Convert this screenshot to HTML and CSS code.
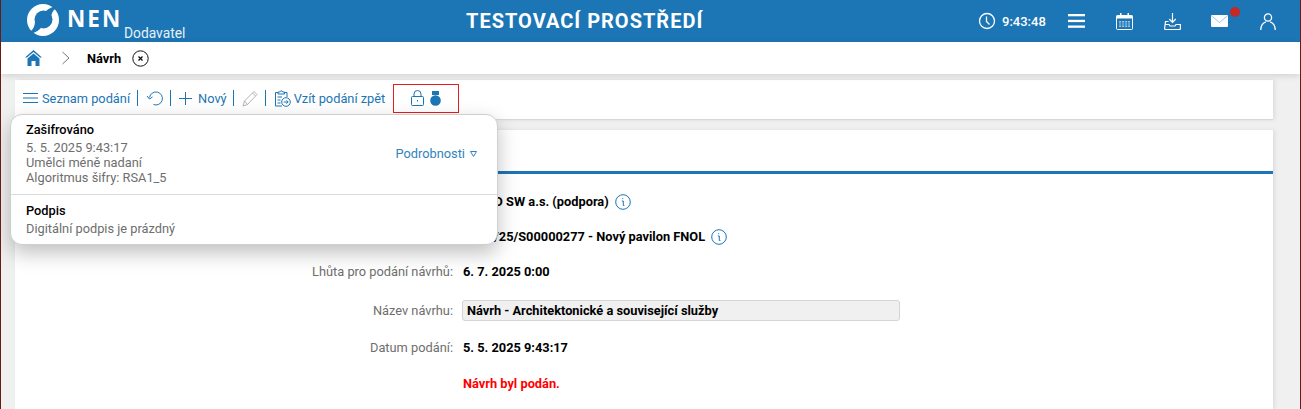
FILE: index.html
```html
<!DOCTYPE html>
<html lang="cs">
<head>
<meta charset="utf-8">
<title>NEN</title>
<link rel="stylesheet" href="styles.css">
</head>
<body>
<div class="app">
  <header class="topbar">
    <div class="brand">
      <svg class="logo" width="32" height="32" viewBox="0 0 32 32"><circle cx="16" cy="16" r="16" fill="#fff"/><circle cx="16.500" cy="15.500" r="9" fill="#1c75b4"/><path d="M8 17C8 22 6 26 3 27.500L5 29.500C9.500 28 12 26 14 24Z" fill="#1c75b4"/><path d="M24 15C24 10 26 6 29 4.500L27 2.500C22.500 4 20 6 18 8Z" fill="#1c75b4"/></svg>
      <span class="nen">NEN</span>
      <span class="role">Dodavatel</span>
    </div>
    <div class="env">TESTOVACÍ PROSTŘEDÍ</div>
    <div class="tools">
      <svg class="clock" width="18" height="18" viewBox="0 0 18 18" fill="none" stroke="#fff" stroke-width="1.300"><circle cx="9" cy="9" r="7.500"/><path d="M8.500 4.500V9.500L11.500 12.500"/></svg>
      <span class="time">9:43:48</span>
      <svg class="t-menu" width="17" height="14" viewBox="0 0 17 14" fill="#fff"><rect y="0" width="17" height="2.300"/><rect y="5.800" width="17" height="2.300"/><rect y="11.500" width="17" height="2.300"/></svg>
      <svg class="t-cal" width="17" height="17" viewBox="0 0 17 17"><rect x=".5" y="2.500" width="16" height="14" rx="1" fill="none" stroke="#fff"/><rect x=".5" y="2.500" width="16" height="3" fill="#fff"/><rect x="4" y="0" width="1.500" height="3" fill="#fff"/><rect x="11.500" y="0" width="1.500" height="3" fill="#fff"/><path d="M3 8h11v6H3z" fill="#fff" opacity=".55"/><path d="M5.500 8v6M8.500 8v6M11.500 8v6M3 10h11M3 12h11" stroke="#1c75b4" stroke-width=".8"/></svg>
      <svg class="t-down" width="17" height="17" viewBox="0 0 17 17" fill="none" stroke="#fff" stroke-width="1.200"><path d="M8.500 0V9M5.200 6L8.500 9.500 11.800 6"/><path d="M4.500 8.500H1.500L.6 15.500a1 1 0 0 0 1 1H15.400a1 1 0 0 0 1-1V11.500H12L11 13H6L5 11.500H.6"/></svg>
      <span class="t-mail">
        <svg width="17" height="12" viewBox="0 0 17 12"><rect width="17" height="12" rx="1" fill="#fff"/><path d="M.5 .8L8.500 7.500 16.500 .8" fill="none" stroke="#9fc5e0"/></svg>
        <span class="badge"></span>
      </span>
      <svg class="t-user" width="16" height="17" viewBox="0 0 16 17" fill="none" stroke="#fff" stroke-width="1.300"><circle cx="8" cy="4.500" r="3.600"/><path d="M.7 17C1 12 4 9.500 5.800 8.900M15.300 17C15 12 12 9.500 10.200 8.900"/></svg>
    </div>
  </header>

  <nav class="crumbs">
    <svg class="home" width="17" height="16" viewBox="0 0 17 16"><path d="M8.500 0L17 7.500H15L8.500 2 2 7.500H0Z" fill="#1c75b4"/><path d="M2.500 8.500L8.500 3.500 14.500 8.500V16H10.500V11H6.500V16H2.500Z" fill="#1c75b4"/></svg>
    <svg class="chev" width="8" height="14" viewBox="0 0 8 14" fill="none" stroke="#777"><path d="M.5 1L7 7 .5 13"/></svg>
    <span class="crumb">Návrh</span>
    <svg class="close" width="17" height="17" viewBox="0 0 17 17" fill="none" stroke="#111"><circle cx="8.500" cy="8.500" r="7.700"/><path d="M6.500 6.500L10.500 10.500M10.500 6.500L6.500 10.500" stroke-width="1.300"/></svg>
  </nav>

  <main class="content">
    <section class="toolbar">
      <a class="tb-item"><svg width="15" height="10" viewBox="0 0 15 10" stroke="#1c75b4"><path d="M0 .5H15M0 5H15M0 9.500H15"/></svg><span>Seznam podání</span></a>
      <i class="sep"></i>
      <a class="tb-item"><svg width="17" height="16" viewBox="0 0 17 16" fill="none" stroke="#1c75b4"><path d="M3.500 7.500A6.500 6.500 0 1 1 7.500 14.500"/><path d="M1 6L3.500 9 6.500 7"/></svg></a>
      <i class="sep"></i>
      <a class="tb-item tb-new"><svg width="13" height="13" viewBox="0 0 13 13" stroke="#1c75b4"><path d="M6.500 0V13M0 6.500H13"/></svg><span>Nový</span></a>
      <i class="sep"></i>
      <a class="tb-item"><svg width="16" height="17" viewBox="0 0 16 17" fill="none" stroke="#b3b3b3"><path d="M1 16L2.500 11 12 1.500 15 4.500 5.500 14.500Z"/><path d="M2.500 11L5.500 14.500M10.500 3L13.500 6"/></svg></a>
      <i class="sep"></i>
      <a class="tb-item tb-back"><svg width="17" height="17" viewBox="0 0 17 17" fill="none" stroke="#1c75b4"><path d="M4 2.500H1.500V16H8M10.500 2.500H13V7"/><path d="M4 4V2H5.800A1.500 1.500 0 0 1 8.700 2H10.500V4Z"/><path d="M3.500 7H8M3.500 10H6.500M3.500 13H6.500"/><circle cx="12" cy="12" r="4.300"/><path d="M9.700 12H14M12.500 10.300L14.200 12 12.500 13.700"/></svg><span>Vzít podání zpět</span></a>
      <div class="status">
        <svg width="13" height="16" viewBox="0 0 13 16" fill="none" stroke="#1c75b4"><rect x=".5" y="6.500" width="12" height="9" rx="1"/><path d="M3 6.500V4a3.500 3.500 0 0 1 7 0V6.500"/><path d="M6.500 10v1.500"/></svg>
        <svg width="11" height="15" viewBox="0 0 11 15" fill="#1c75b4"><rect x="2" y="0" width="7" height="4"/><circle cx="5.500" cy="9.500" r="5.300"/></svg>
      </div>
    </section>

    <section class="card">
      <div class="tabs"></div>
      <div class="form">
        <div class="row"><span class="lbl">Účastník:</span><b class="val">QCM D SW a.s. (podpora)<svg class="info" width="16" height="16" viewBox="0 0 16 16"><circle cx="8" cy="8" r="7.300" fill="none" stroke="#1c75b4"/><path d="M6.800 7H8.300V11.500H9.400M7.700 4.200V5.200" fill="none" stroke="#1c75b4"/></svg></b></div>
        <div class="row"><span class="lbl">Zakázka:</span><b class="val">N006/25/S00000277 - Nový pavilon FNOL<svg class="info" width="16" height="16" viewBox="0 0 16 16"><circle cx="8" cy="8" r="7.300" fill="none" stroke="#1c75b4"/><path d="M6.800 7H8.300V11.500H9.400M7.700 4.200V5.200" fill="none" stroke="#1c75b4"/></svg></b></div>
        <div class="row"><span class="lbl">Lhůta pro podání návrhů:</span><b class="val">6. 7. 2025 0:00</b></div>
        <div class="row row-input"><span class="lbl">Název návrhu:</span><b class="field">Návrh - Architektonické a související služby</b></div>
        <div class="row"><span class="lbl">Datum podání:</span><b class="val">5. 5. 2025 9:43:17</b></div>
        <div class="row row-note"><span class="lbl"></span><b class="val err">Návrh byl podán.</b></div>
      </div>
    </section>

    <aside class="popup">
      <div class="pop-sec pop-first">
        <div>
          <h4>Zašifrováno</h4>
          <p>5. 5. 2025 9:43:17</p>
          <p>Umělci méně nadaní</p>
          <p>Algoritmus šifry: RSA1_5</p>
        </div>
        <a class="more">Podrobnosti <svg width="7" height="6" viewBox="0 0 7 6" fill="none" stroke="#2f83bd"><path d="M.5 .5H6.500L3.500 5.500Z"/></svg></a>
      </div>
      <div class="pop-sec">
        <div>
          <h4>Podpis</h4>
          <p>Digitální podpis je prázdný</p>
        </div>
      </div>
    </aside>
  </main>
</div>
</body>
</html>
```
FILE: styles.css
```css
* { box-sizing: border-box; }
html, body { margin: 0; height: 100%; overflow: hidden; }
body { font-family: Roboto, "Liberation Sans", sans-serif; font-size: 12.8px; color: #000; background: #f0f0f0; }
.app { height: 409px; border-left: 1px solid #6b1a14; border-right: 1px solid #6b1a14; display: flex; flex-direction: column; position: relative; background: #f0f0f0; overflow: hidden; }

.topbar { height: 42px; background: #1c75b4; color: #fff; display: flex; align-items: center; flex: none; position: relative; }
.brand { display: flex; align-items: center; width: 465px; padding-left: 26px; height: 42px; flex: none; }
.logo { flex: none; position: relative; top: -1px; }
.nen { font-family: "Open Sans", sans-serif; font-weight: 700; font-size: 22.500px; letter-spacing: 2px; margin-left: 8px; line-height: 42px; position: relative; top: -2px; width: 57px; }
.role { font-size: 13.800px; position: relative; top: 12px; color: #e6f1f8; }
.env { font-weight: 700; font-size: 20px; letter-spacing: 1px; white-space: nowrap; width: 512px; }
.tools { display: flex; align-items: center; }
.time { font-size: 13px; font-weight: 500; margin-left: 6px; width: 49px; }
.clock { flex: none; }
.t-menu { margin-left: 17px; }
.t-cal { margin-left: 31px; }
.t-down { margin-left: 31px; }
.t-mail { margin-left: 30px; position: relative; display: flex; }
.badge { position: absolute; left: 19px; top: -8px; width: 10px; height: 10px; border-radius: 50%; background: #c62828; }
.t-user { margin-left: 32px; }

.crumbs { height: 32px; background: #fff; display: flex; align-items: center; padding-left: 24px; flex: none; box-shadow: 0 2px 6px rgba(0,0,0,.12); position: relative; z-index: 1; }
.chev { margin-left: 20px; }
.crumb { font-weight: 700; margin-left: 17px; }
.close { margin-left: 11px; }

.content { flex: 1; padding: 6px 27px 0 14px; position: relative; min-height: 0; display: flex; flex-direction: column; }
.toolbar { height: 40px; flex: none; background: #fff; border-bottom: 1px solid #d8d8d8; box-shadow: 2px 0 4px rgba(0,0,0,.08); display: flex; align-items: center; padding: 0 0 3px 8px; color: #1c75b4; }
.tb-item { display: flex; align-items: center; gap: 4px; color: #1c75b4; }
.tb-new { gap: 6px; margin-right: -1px; }
.tb-back { gap: 3px; }
.sep { width: 1px; height: 16px; background: #1c75b4; margin: 0 8px 0 7px; }
.status { margin-left: 8px; width: 66px; height: 29px; border: 1px solid #e81c1c; display: flex; align-items: center; gap: 6px; padding-left: 17px; }

.card { margin-top: 10px; flex: 1; background: #fff; box-shadow: 2px 0 4px rgba(0,0,0,.08); }
.tabs { height: 44px; border-bottom: 3px solid #1c75b4; }
.form { padding-top: 10px; }
.row { display: flex; align-items: center; height: 35px; }
.row-input { height: 42px; margin-bottom: -1px; }
.row-note { margin-top: 1px; }
.lbl { width: 438px; text-align: right; color: #6e6e6e; flex: none; }
.val { margin-left: 10px; font-weight: 700; display: flex; align-items: center; white-space: pre; }
.info { margin-left: 6px; }
.err { color: #f00; }
.field { width: 438px; height: 21px; background: #f0f0f0; border: 1px solid #d4d4d4; border-radius: 3px; padding: 0 4px; line-height: 20px; font-weight: 700; margin-left: 9px; }

.popup { position: absolute; left: 9px; top: 40px; width: 488px; height: 131px; background: #fff; border: 1px solid #cfcfcf; border-radius: 12px; box-shadow: 0 8px 20px rgba(0,0,0,.25); color: #6e6e6e; z-index: 5; }
.pop-sec { padding: 8px 15px 0; }
.pop-first { height: 80px; border-bottom: 1px solid #dcdcdc; display: flex; justify-content: space-between; align-items: flex-start; padding: 7px 20px 0 15px; }
h4 { margin: 0 0 3px; font-size: 12.8px; font-weight: 500; color: #000; line-height: 15px; }
p { margin: 0; line-height: 15px; }
.more { color: #2f83bd; display: flex; align-items: center; gap: 5px; margin-top: 24px; }
```
